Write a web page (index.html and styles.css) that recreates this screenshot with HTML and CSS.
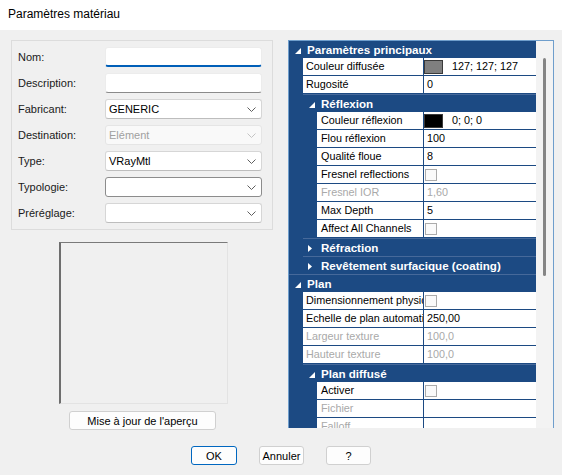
FILE: index.html
```html
<!DOCTYPE html>
<html lang="fr">
<head>
    <meta charset="UTF-8">
    <title>Paramètres matériau</title>
    <link rel="stylesheet" href="styles.css">
</head>
<body>
    <div class="titlebar">Paramètres matériau</div>

    <div class="dialog">
        <div class="left">
            <div class="group">
                <div class="field"><span class="label">Nom:</span><div class="edit focused"></div></div>
                <div class="field"><span class="label">Description:</span><div class="edit"></div></div>
                <div class="field"><span class="label">Fabricant:</span><div class="combo"><span>GENERIC</span><svg class="chev" viewBox="0 0 9 5"><polyline points="0.5,0.5 4.5,4.5 8.5,0.5"/></svg></div></div>
                <div class="field"><span class="label">Destination:</span><div class="combo disabled"><span>Elément</span><svg class="chev" viewBox="0 0 9 5"><polyline points="0.5,0.5 4.5,4.5 8.5,0.5"/></svg></div></div>
                <div class="field"><span class="label">Type:</span><div class="combo"><span>VRayMtl</span><svg class="chev" viewBox="0 0 9 5"><polyline points="0.5,0.5 4.5,4.5 8.5,0.5"/></svg></div></div>
                <div class="field"><span class="label">Typologie:</span><div class="combo hover"><span></span><svg class="chev" viewBox="0 0 9 5"><polyline points="0.5,0.5 4.5,4.5 8.5,0.5"/></svg></div></div>
                <div class="field"><span class="label">Préréglage:</span><div class="combo"><span></span><svg class="chev" viewBox="0 0 9 5"><polyline points="0.5,0.5 4.5,4.5 8.5,0.5"/></svg></div></div>
            </div>
            <div class="preview"></div>
            <button class="btn preview-btn">Mise à jour de l'aperçu</button>
        </div>

        <div class="grid-panel">
            <div class="grid">
                <div class="gh first"><span class="tri"><svg viewBox="0 0 6 6"><polygon points="6,0 6,6 0,6"/></svg></span>Paramètres principaux</div>
                <div class="gr"><div class="gl">Couleur diffusée</div><div class="gv"><span class="swatch grey"></span>127; 127; 127</div></div>
                <div class="gr"><div class="gl">Rugosité</div><div class="gv">0</div></div>

                <div class="gh sub"><span class="tri"><svg viewBox="0 0 6 6"><polygon points="6,0 6,6 0,6"/></svg></span>Réflexion</div>
                <div class="gr sub"><div class="gl">Couleur réflexion</div><div class="gv"><span class="swatch black"></span>0; 0; 0</div></div>
                <div class="gr sub"><div class="gl">Flou réflexion</div><div class="gv">100</div></div>
                <div class="gr sub"><div class="gl">Qualité floue</div><div class="gv">8</div></div>
                <div class="gr sub"><div class="gl">Fresnel reflections</div><div class="gv"><span class="check"></span></div></div>
                <div class="gr sub off"><div class="gl">Fresnel IOR</div><div class="gv">1,60</div></div>
                <div class="gr sub"><div class="gl">Max Depth</div><div class="gv">5</div></div>
                <div class="gr sub"><div class="gl">Affect All Channels</div><div class="gv"><span class="check"></span></div></div>

                <div class="gh sub"><span class="tri"><svg class="closed" viewBox="0 0 4 7"><polygon points="0,0 4,3.5 0,7"/></svg></span>Réfraction</div>
                <div class="gh sub"><span class="tri"><svg class="closed" viewBox="0 0 4 7"><polygon points="0,0 4,3.5 0,7"/></svg></span>Revêtement surfacique (coating)</div>

                <div class="gh"><span class="tri"><svg viewBox="0 0 6 6"><polygon points="6,0 6,6 0,6"/></svg></span>Plan</div>
                <div class="gr"><div class="gl">Dimensionnement physique</div><div class="gv"><span class="check"></span></div></div>
                <div class="gr"><div class="gl">Echelle de plan automatique</div><div class="gv">250,00</div></div>
                <div class="gr off"><div class="gl">Largeur texture</div><div class="gv">100,0</div></div>
                <div class="gr off"><div class="gl">Hauteur texture</div><div class="gv">100,0</div></div>

                <div class="gh sub"><span class="tri"><svg viewBox="0 0 6 6"><polygon points="6,0 6,6 0,6"/></svg></span>Plan diffusé</div>
                <div class="gr sub"><div class="gl">Activer</div><div class="gv"><span class="check"></span></div></div>
                <div class="gr sub off"><div class="gl">Fichier</div><div class="gv"></div></div>
                <div class="gr sub off"><div class="gl">Falloff</div><div class="gv"></div></div>
            </div>
            <div class="scrollbar"><div class="thumb"></div></div>
        </div>
    </div>

    <div class="actions">
        <button class="btn default">OK</button>
        <button class="btn">Annuler</button>
        <button class="btn">?</button>
    </div>
</body>
</html>
```

FILE: styles.css
```css
body {
    margin: 0;
    width: 562px;
    height: 475px;
    overflow: hidden;
    background-color: #f0f0f0;
    font-family: "Liberation Sans", Arial, sans-serif;
    font-size: 11px;
    color: #000;
}
.titlebar {
    height: 30px;
    line-height: 28px;
    padding-left: 8px;
    background-color: #fff;
    font-size: 12px;
    box-sizing: border-box;
}
.dialog {
    display: flex;
    gap: 15px;
    height: 400px;
    padding: 10px 0 0 11px;
    box-sizing: border-box;
}
.left {
    width: 262px;
    display: flex;
    flex-direction: column;
}
.group {
    border: 1px solid #dcdcdc;
    padding: 6px 0 0 6px;
    height: 190px;
    box-sizing: border-box;
}
.field {
    display: flex;
    align-items: center;
    height: 20px;
    margin-bottom: 6px;
}
.label {
    width: 87px;
    color: #1a1a1a;
}
.edit, .combo {
    width: 157px;
    height: 20px;
    box-sizing: border-box;
    background-color: #fff;
}
.edit {
    border: 1px solid #ececec;
    border-bottom: 1px solid #8a8a8a;
    border-radius: 3px;
}
.edit.focused {
    border-bottom: 2px solid #005fb8;
}
.combo {
    display: flex;
    align-items: center;
    justify-content: space-between;
    padding: 0 5px 0 3px;
    border: 1px solid #d6d6d6;
    border-bottom-color: #bdbdbd;
    border-radius: 3px;
}
.combo.hover {
    border-color: #8c8c8c;
}
.combo.disabled {
    background-color: #f9f9f9;
    border-color: #e5e5e5;
    color: #a0a0a0;
}
.chev {
    width: 9px;
    height: 5px;
    fill: none;
    stroke: #5f5f5f;
    stroke-width: 1;
}
.combo.disabled .chev {
    stroke: #c4c4c4;
}
.preview {
    width: 169px;
    height: 165px;
    margin: 12px 0 0 48px;
    box-sizing: border-box;
    border: 1px solid #e3e3e3;
    border-top-color: #7a7a7a;
    border-left: 2px solid #6e6e6e;
}
.btn {
    height: 19px;
    padding: 0;
    background-color: #fdfdfd;
    border: 1px solid #d0d0d0;
    border-radius: 3px;
    font-family: inherit;
    font-size: 11px;
    color: #000;
}
.preview-btn {
    width: 147px;
    margin: 7px 0 0 58px;
}
.grid-panel {
    display: flex;
    width: 266px;
    height: 388px;
    box-sizing: border-box;
    border: 1px solid #6f9ecc;
    border-bottom: none;
}
.grid {
    width: 247px;
    background-color: #1c4a83;
    overflow: hidden;
}
.gh {
    display: flex;
    align-items: center;
    height: 18px;
    box-sizing: border-box;
    padding-left: 6px;
    border-top: 1px solid #46699a;
    color: #fff;
    font-weight: bold;
    font-size: 11.6px;
    white-space: nowrap;
}
.gh.first {
    height: 17px;
    border-top: none;
}
.gh.sub {
    margin-left: 14px;
}
.tri {
    width: 12px;
    display: flex;
    align-items: center;
}
.tri svg {
    width: 6px;
    height: 6px;
    fill: #fff;
    margin-top: 2px;
}
.tri svg.closed {
    width: 4px;
    height: 7px;
    margin: 1px 0 0 -1px;
}
.gr {
    display: flex;
    gap: 1px;
    height: 18px;
    margin-left: 14px;
    font-size: 10.8px;
}
.gr.sub {
    margin-left: 28px;
}
.gl, .gv {
    height: 17px;
    line-height: 17px;
    background-color: #fff;
    white-space: nowrap;
    overflow: hidden;
}
.gl {
    width: 117px;
    padding-left: 3px;
    flex-shrink: 0;
}
.gr.sub .gl {
    width: 102px;
    padding-left: 4px;
}
.gv {
    flex: 1;
    display: flex;
    align-items: center;
    padding-left: 3px;
}
.gr.off .gl, .gr.off .gv {
    color: #a9a9a9;
}
.swatch {
    width: 19px;
    height: 14px;
    box-sizing: border-box;
    margin: 0 9px 0 -3px;
    border: 1px solid #3a3a3a;
}
.swatch.grey {
    background-color: #7f7f7f;
}
.swatch.black {
    background-color: #000;
}
.check {
    width: 12px;
    height: 12px;
    box-sizing: border-box;
    margin-left: -2px;
    border: 1px solid #ababab;
    background-color: #fafafa;
}
.scrollbar {
    width: 17px;
    background-color: #f3f3f3;
    position: relative;
}
.thumb {
    position: absolute;
    left: 7px;
    top: 17px;
    width: 3px;
    height: 218px;
    border-radius: 2px;
    background-color: #858585;
}
.actions {
    display: flex;
    justify-content: center;
    gap: 22px;
    margin-top: 16px;
}
.actions .btn {
    width: 45px;
}
.actions .btn.default {
    width: 46px;
    border-color: #0067c0;
}
```
